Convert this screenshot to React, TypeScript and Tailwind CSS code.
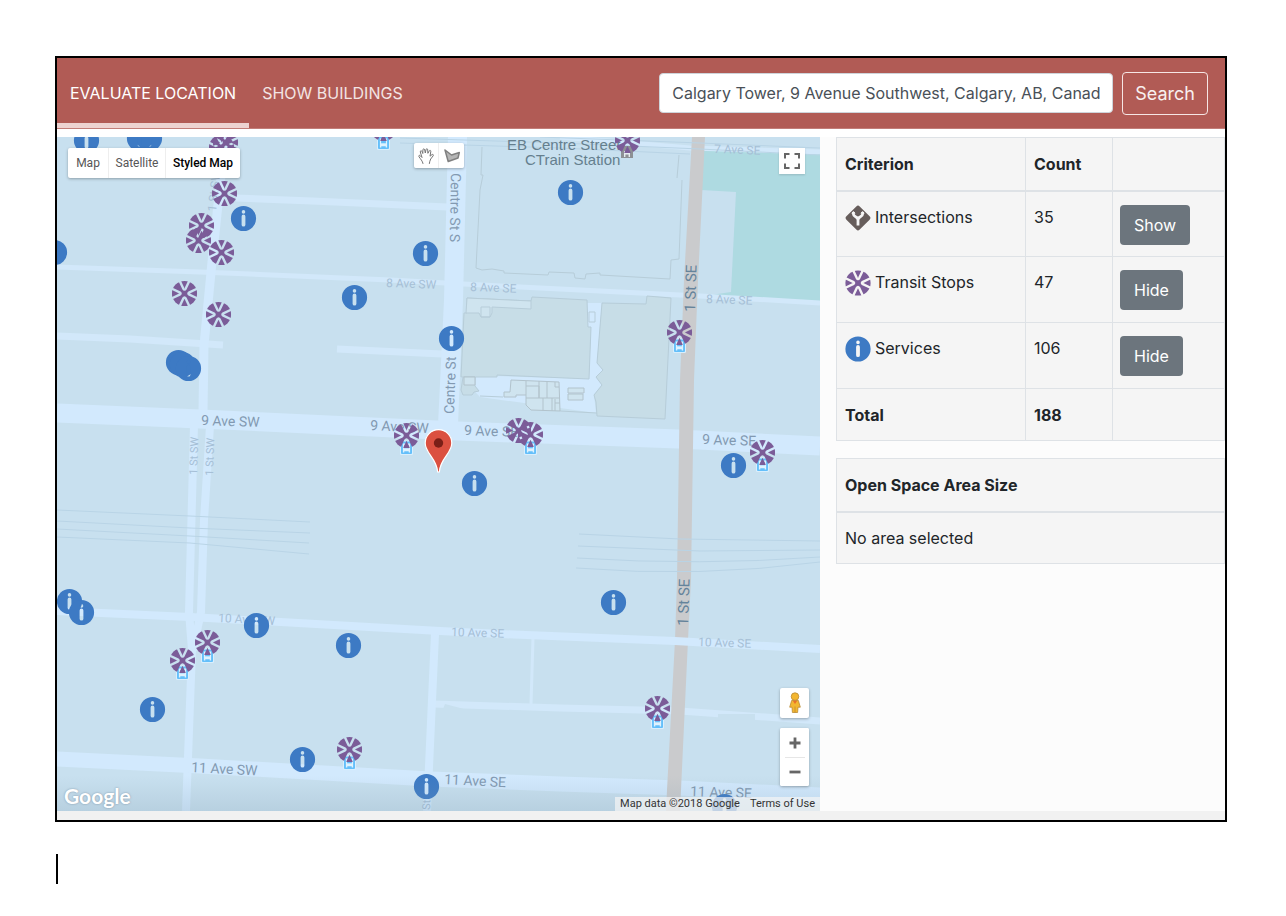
import { useId, type ReactNode } from "react";

const infoPins: [number, number][] = [
  [86, 140], [144, 134], [149, 138], [139, 138], [243, 218], [54, 252], [354, 297], [425, 253],
  [570, 192], [451, 338], [178, 362], [182, 364], [188, 368], [474, 483], [733, 465], [613, 602],
  [256, 625], [348, 645], [69, 601], [81, 612], [152, 709], [302, 759], [426, 786], [724, 806],
];

const transitPins: [number, number][] = [
  [221, 147], [225, 142], [224, 193], [201, 225], [198, 240], [221, 252], [184, 293], [218, 314],
  [627, 140], [383, 128], [679, 332], [406, 435], [518, 430], [530, 434], [762, 452], [207, 642],
  [182, 660], [349, 749], [657, 708],
];

const busStops: [number, number][] = [
  [383, 143], [679, 346], [406, 448], [530, 448], [762, 465], [207, 656], [182, 673], [349, 763], [657, 722],
];

type StreetLabel = { text: string; x: number; y: number; size: number; angle: number; fill: string };

const strong = "#8299b1";
const faint = "#a6bfd6";
const dark = "#64839b";

const labels: StreetLabel[] = [
  { text: "9 Ave SW", x: 201, y: 425, size: 14, angle: 2, fill: strong },
  { text: "9 Ave SW", x: 370, y: 430, size: 14, angle: 3, fill: strong },
  { text: "9 Ave SE", x: 464, y: 435, size: 14, angle: 2, fill: strong },
  { text: "9 Ave SE", x: 702, y: 444, size: 14, angle: 2, fill: strong },
  { text: "8 Ave SW", x: 386, y: 287, size: 12, angle: 2, fill: faint },
  { text: "8 Ave SE", x: 470, y: 291, size: 12, angle: 2, fill: faint },
  { text: "8 Ave SE", x: 706, y: 303, size: 12, angle: 2, fill: faint },
  { text: "7 Ave SE", x: 714, y: 153, size: 12, angle: 2, fill: faint },
  { text: "10 Ave SW", x: 218, y: 622, size: 12, angle: 3, fill: faint },
  { text: "10 Ave SE", x: 451, y: 636, size: 12, angle: 2, fill: faint },
  { text: "10 Ave SE", x: 698, y: 646, size: 12, angle: 2, fill: faint },
  { text: "11 Ave SW", x: 191, y: 772, size: 14, angle: 3, fill: strong },
  { text: "11 Ave SE", x: 444, y: 784, size: 14, angle: 3, fill: strong },
  { text: "11 Ave SE", x: 690, y: 796, size: 14, angle: 2, fill: strong },
  { text: "Centre St S", x: 451, y: 173, size: 14, angle: 91, fill: strong },
  { text: "Centre St", x: 454, y: 414, size: 14, angle: -88, fill: strong },
  { text: "1 St SE", x: 695, y: 312, size: 15, angle: -88, fill: dark },
  { text: "1 St SE", x: 688, y: 626, size: 15, angle: -88, fill: dark },
  { text: "1 St SW", x: 197, y: 475, size: 11, angle: -88, fill: faint },
  { text: "1 St SW", x: 213, y: 476, size: 11, angle: -88, fill: faint },
  { text: "1 St SW", x: 216, y: 212, size: 12, angle: -84, fill: faint },
  { text: "St", x: 430, y: 810, size: 11, angle: -88, fill: faint },
];

function InfoShape() {
  return (
    <path
      fill="#3d7ac4"
      fillRule="evenodd"
      d="M0-12.6A12.6 12.6 0 1 1 0 12.6 12.6 12.6 0 1 1 0-12.6ZM0-8.4a1.8 1.8 0 1 0 0 3.6 1.8 1.8 0 1 0 0-3.6ZM-1.9-2v8.2a1.9 1.9 0 0 0 3.8 0V-2a1.9 1.9 0 0 0-3.8 0Z"
    />
  );
}

function TransitShape({ maskId }: { maskId: string }) {
  const vee = "M-5-13-1.2-4.9Q0-2.9 1.2-4.9L5-13";
  return (
    <>
      <mask id={maskId} maskUnits="userSpaceOnUse" x={-13} y={-13} width={26} height={26}>
        <rect x={-13} y={-13} width={26} height={26} fill="white" />
        <g fill="none" stroke="black" strokeWidth={2.4} strokeLinejoin="round">
          <path d={vee} />
          <path d={vee} transform="rotate(90)" />
          <path d={vee} transform="rotate(180)" />
          <path d={vee} transform="rotate(270)" />
        </g>
      </mask>
      <circle r={12.6} fill="#7b5c98" mask={`url(#${maskId})`} />
    </>
  );
}

function IntersectionShape() {
  return (
    <>
      <rect x={-9.4} y={-9.4} width={18.8} height={18.8} rx={2.4} transform="rotate(45)" fill="#665d5b" />
      <path
        d="M-4.6-6V-4Q-4.6-2.4-2.4-1.2 0 0 0 2 0 0 2.4-1.2 4.6-2.4 4.6-4V-6M0 1V7.6"
        fill="none"
        stroke="#f5f5f5"
        strokeWidth={2.8}
        strokeLinejoin="round"
      />
      <path d="M-6.8-4.4-4.6-7-2.4-4.4ZM6.8-4.4 4.6-7 2.4-4.4Z" fill="#f5f5f5" />
    </>
  );
}

function CriterionIcon({ kind }: { kind: string }) {
  const id = useId();
  return (
    <svg viewBox="-13 -13 26 26" className="size-[26px] shrink-0" aria-hidden="true">
      {kind === "Intersections" && <IntersectionShape />}
      {kind === "Transit Stops" && <TransitShape maskId={id} />}
      {kind === "Services" && <InfoShape />}
    </svg>
  );
}

function MapDrawing() {
  return (
    <svg
      viewBox="57 137 763 674"
      preserveAspectRatio="xMidYMid slice"
      className="block h-full w-full font-[Roboto,sans-serif]"
      role="img"
      aria-label="Map of downtown Calgary"
    >
      <defs>
        <symbol id="info" viewBox="-13 -13 26 26" overflow="visible"><InfoShape /></symbol>
        <symbol id="transit" viewBox="-13 -13 26 26" overflow="visible"><TransitShape maskId="transit-slots" /></symbol>
        <symbol id="bus" viewBox="-6 -8 12 14" overflow="visible">
          <rect x={-6.5} y={-8} width={13} height={14.500} rx={1.5} fill="#d9effd" />
          <rect x={-5.5} y={-7} width={11} height={12.500} rx={1} fill="#64bffa" />
          <path d="M-3.6-5H3.6V4H2.2V2.8H-2.2V4H-3.6Z" fill="#dff2fe" />
          <path d="M-2.4-3.2H2.4V-.2H-2.4Z" fill="#64bffa" />
        </symbol>
        <linearGradient id="shade" x1="0" x2="0" y1="0" y2="1">
          <stop offset="0" stopColor="#7c98ab" stopOpacity="0" />
          <stop offset="1" stopColor="#7c98ab" stopOpacity=".22" />
        </linearGradient>
      </defs>

      <rect x={57} y={137} width={763} height={674} fill="#c8e0ef" />
      <path d="M703 148 820 152V303L697 297Z" fill="#aedae1" />
      <path d="M701 190 736 192 731 292 697 297Z" fill="#c8e0ef" />

      {/* secondary lanes */}
      <g fill="none" stroke="#d2e8fa">
        <path strokeWidth={7} d="M236 198 312 201 380 204 447 207M57 336 130 339 223 345M337 349 442 354M434 704 560 708 680 711 820 721" />
        <path strokeWidth={5} d="M57 267 200 272 390 280 520 287 700 296 820 303M560 137 690 148 820 152" />
        <path strokeWidth={3} d="M533 638 531 704" />
      </g>
      <path d="M445 704 464 709H443ZM718 714H755V722H718Z" fill="#c8e0ef" />

      {/* main streets */}
      <g fill="none" stroke="#d2e9fd" strokeLinejoin="round">
        <path strokeWidth={9} d="M225 137 212 262 204 345 203 412" />
        <path strokeWidth={8} d="M194 425 189 612 192 650 186 811M210 426 204 520 201 612 193 650" />
        <path strokeWidth={8} d="M435 634 427 811" />
        <path strokeWidth={19} d="M57 413 200 419 458 431 678 439 820 446" />
        <path strokeWidth={15} d="M57 759 200 766 430 779 560 784 680 788 820 795" />
      </g>
      <path d="M448 137H467L463 300 458 425H438L444 300Z" fill="#d2e9fd" />
      <path d="M692 137H705L698 280 694 380 691 580 688 640 681 790 680 811H666L667 790 675 640 677 580 680 380 684 280Z" fill="#cacbcd" />
      <path d="M57 611 190 617 440 631 500 634 675 641 820 649" fill="none" stroke="#d2e9fd" strokeWidth={8} />

      {/* rail lines */}
      <g fill="none" stroke="#b9d4e6" strokeWidth={1}>
        <path d="M57 510 190 516 310 522M57 521 190 528 310 533M57 529 190 536 309 543M57 537 190 543 309 554" />
        <path d="M579 534 680 539 820 541M578 546 700 551 820 550M577 558 Q700 566 820 557M576 568 Q700 578 820 562" />
        <path d="M400 138 560 143 700 149 820 155M400 143 560 148 690 154M540 137 700 143 820 148" />
      </g>

      {/* building footprints */}
      <g stroke="#b7cdd9" strokeWidth={1}>
        <path fill="none" d="M482 147 481 175H483L480 190 479 210 476 268 482 270 492 269 504 271V273L548 275 549 272 574 273 575 278 585 279 586 274 600 273V275L670 279 671 260 679 259 682 180M679 155 677 178" />
        <path fill="#d2e9fd" stroke="none" d="M587 303H602L600 325 597 363 603 370 596 377 602 385 594 395 596 413 480 397 461 377 496 376 589 379 591 328 587 327Z" />
        <path fill="none" d="M480 396 503 397M560 411 597 413" />
        <path fill="#c7dde7" d="M467 298 531 301 532 297 587 300 588 327H591L589 379 497 375V377L461 377 464 313H467Z" />
        <path fill="#c7dde7" d="M602 303 646 304 647 296 671 298 665 419 597 416 596 402 594 395 602 385 596 377 603 370 597 363Z" />
        <path fill="#cfe4ef" d="M467 298 531 301V309L492 307V313L490 317H481L479 313H466Z" />
        <path fill="none" d="M481 307H490V317H481ZM589 312H595V322H589Z" />
        <path fill="#c7dde7" d="M463 377H475V386L479 391 474 392 472 395H463L461 390Z" />
        <g stroke="#b2c3cc">
          <path fill="#cfe4ef" d="M464 377H475V385H464ZM511 380 559 382 560 411 531 410 526 405V395H516V397H504V392H510ZM568 388H584V393H568ZM568 394H583V400H568Z" />
          <path fill="none" d="M526 381V395M526 386H539V398M539 381V398M547 382V398M526 398H560M543 398V411M552 398V411M555 382V387H559M555 399V411M555 403H560" />
        </g>
      </g>

      {labels.map((l) => (
        <text key={`${l.text}-${l.x}-${l.y}`} fontSize={l.size} fill={l.fill} transform={`translate(${l.x} ${l.y}) rotate(${l.angle})`}>
          {l.text}
        </text>
      ))}
      <g fontSize={15} fill="#657f8e" className="font-['Liberation_Sans',Arial,sans-serif]">
        <text x={507} y={150}>EB Centre Street</text>
        <text x={525} y={165}>CTrain Station</text>
      </g>
      <path d="M621 146H633V158H621Z" fill="#8d9094" />
      <path d="M624 151H630V157H628.600V154.500H625.400V157H624Z" fill="#e6ecf0" />

      <g transform="translate(.5 .5)">
        {busStops.map(([x, y]) => (
          <use key={`${x}-${y}`} href="#bus" x={x - 6} y={y - 8} width={12} height={14} />
        ))}
        {transitPins.map(([x, y]) => (
          <use key={`${x}-${y}`} href="#transit" x={x - 13} y={y - 13} width={26} height={26} />
        ))}
        {infoPins.map(([x, y]) => (
          <use key={`${x}-${y}`} href="#info" x={x - 13} y={y - 13} width={26} height={26} />
        ))}
      </g>

      <g transform="translate(438.500 443)">
        <path
          d="M-.8 29C-1.800 15-13.300 10.500-13.300 0A13.300 13.300 0 0 1 13.300 0C13.300 10.500 1.800 15 .8 29Z"
          fill="#db5040"
          stroke="#fff"
          strokeWidth={1.2}
        />
        <circle r={4.700} fill="#7a1f17" />
      </g>
      <rect x={57} y={776} width={763} height={35} fill="url(#shade)" />
    </svg>
  );
}

function ControlButton({ label, className, children }: { label: string; className: string; children: ReactNode }) {
  return (
    <button type="button" aria-label={label} className={`flex items-center justify-center bg-white ${className}`}>
      {children}
    </button>
  );
}

function MapPane() {
  return (
    <section className="relative h-[674px] min-w-0 flex-1 overflow-hidden font-[Roboto,sans-serif]">
      <MapDrawing />

      <div className="absolute top-[11px] left-[11px] flex h-[30px] rounded-xs bg-white text-[12px] text-[#565656] shadow-[0_1px_3px_rgba(0,0,0,0.3)]">
        <button type="button" className="w-[40px]">Map</button>
        <button type="button" className="w-[58px] border-x border-[#eee]">Satellite</button>
        <button type="button" className="w-[74px] font-medium text-black">Styled Map</button>
      </div>

      <div className="absolute top-[6px] left-[357px] flex rounded-xs shadow-[0_1px_3px_rgba(0,0,0,0.3)]">
        <ControlButton label="Stop drawing" className="h-[25px] w-[25px] rounded-l-xs border-r border-[#eee]">
          <svg viewBox="0 0 18 18" className="size-[18px]" fill="none" stroke="#757575" strokeWidth="1" strokeLinecap="round">
            <path d="M6 16.500C5.500 14 3.500 12 2 9.800 1.200 8.500 2.500 7.800 3.400 8.800L5 10.500 3.300 5C3 3.600 4.600 3.200 5 4.500L5.800 6.500 5.900 3C5.800 1.600 7.500 1.500 7.700 2.900L8.300 6 9 2.600C9.200 1.300 10.800 1.500 10.700 2.800L10.900 6.300 12.200 4C12.700 2.800 14.100 3.300 13.800 4.600L13 9.200 15 7.600C16 6.900 16.900 8 16 9L13.700 12C12.800 13.500 12.700 15 12.400 16.500" />
          </svg>
        </ControlButton>
        <ControlButton label="Draw a shape" className="h-[25px] w-[25px] rounded-r-xs">
          <svg viewBox="0 0 18 18" className="size-[18px]">
            <path d="M2 3 8.500 8 16.300 5.500 15 11 5.200 14.500Z" fill="#b5b5b5" stroke="#808080" strokeWidth="1.5" strokeLinejoin="round" />
          </svg>
        </ControlButton>
      </div>

      <ControlButton label="Toggle fullscreen view" className="absolute top-[11px] right-[15px] size-[26px] shadow-[0_1px_2px_rgba(0,0,0,0.15)]">
        <svg viewBox="0 0 16 16" className="size-[16px]" fill="none" stroke="#666" strokeWidth="2">
          <path d="M1 5.500V1H5.500M10.500 1H15V5.500M15 10.500V15H10.500M5.500 15H1V10.500" />
        </svg>
      </ControlButton>

      <div className="absolute right-[11px] bottom-[25px] flex flex-col gap-[10px]">
        <ControlButton label="Street View" className="h-[30px] w-[29px] rounded-xs shadow-[0_1px_3px_rgba(0,0,0,0.3)]">
          <svg viewBox="0 0 12 22" className="h-[22px] w-[12px]" fill="#f3b62f" stroke="#b98a35" strokeWidth=".8">
            <path d="M2.600 8.500H9.400L11.300 15.200H9L8.600 20.500H3.400L3 15.200H.7Z" />
            <circle cx="6" cy="4.600" r="3.800" />
            <path d="M3.800 8.800 6 12 8.200 8.800Z" fill="#e8702a" stroke="none" />
            <path d="M6 14.500V20.500" />
          </svg>
        </ControlButton>
        <div className="flex flex-col items-center rounded-xs bg-white shadow-[0_1px_3px_rgba(0,0,0,0.3)]">
          <ControlButton label="Zoom in" className="h-[29px] w-[29px] rounded-xs">
            <svg viewBox="0 0 12 12" className="size-[12px]"><path d="M.5 6H11.500M6 .5V11.500" stroke="#666" strokeWidth="2.800" /></svg>
          </ControlButton>
          <div className="h-px w-5 bg-[#e6e6e6]" />
          <ControlButton label="Zoom out" className="h-[28px] w-[29px] rounded-xs">
            <svg viewBox="0 0 12 12" className="size-[12px]"><path d="M.5 6H11.500" stroke="#666" strokeWidth="2.800" /></svg>
          </ControlButton>
        </div>
      </div>

      <a href="#google" className="absolute bottom-0 left-[7px] font-[Lato,sans-serif] text-[21px] leading-[30px] font-bold text-white [text-shadow:0_0_2px_rgba(80,100,120,0.6)]">
        Google
      </a>
      <div className="absolute right-0 bottom-0 flex h-[14px] items-center bg-[#f5f5f5]/70 text-[11px] leading-[14px] text-[#333]">
        <span className="px-[5px]">Map data ©2018 Google</span>
        <a href="#terms" className="px-[5px]">Terms of Use</a>
      </div>
    </section>
  );
}

const criteria = [
  { name: "Intersections", count: 35, action: "Show" },
  { name: "Transit Stops", count: 47, action: "Hide" },
  { name: "Services", count: 106, action: "Hide" },
];

function Sidebar() {
  const line = "border border-[#dee2e6]";
  return (
    <aside className="w-[405px] shrink-0 bg-[#fcfcfc] pl-4 text-[16px] leading-6 text-[#212529]">
      <table className="w-full table-fixed border-collapse bg-[#f5f5f5] text-left">
        <colgroup>
          <col className="w-[189px]" />
          <col className="w-[87px]" />
          <col />
        </colgroup>
        <thead>
          <tr className="h-[53px] border-b-2 border-[#dee2e6]">
            <th scope="col" className={`${line} px-[8px] font-bold`}>Criterion</th>
            <th scope="col" className={`${line} px-[8px] font-bold`}>Count</th>
            <th scope="col" className={line} aria-label="Visibility" />
          </tr>
        </thead>
        <tbody>
          {criteria.map((c) => (
            <tr key={c.name} className="h-[66px] align-top">
              <td className={`${line} px-[8px] pt-[13px]`}>
                <div className="flex gap-[4px]">
                  <CriterionIcon kind={c.name} />
                  <span>{c.name}</span>
                </div>
              </td>
              <td className={`${line} px-[8px] pt-[13px]`}>{c.count}</td>
              <td className={`${line} px-[7px] pt-[13px]`}>
                <button type="button" className="h-10 rounded bg-[#6c757d] px-[14px] text-white">{c.action}</button>
              </td>
            </tr>
          ))}
          <tr className="h-[52px]">
            <th scope="row" className={`${line} px-[8px] font-bold`}>Total</th>
            <td className={`${line} px-[8px] font-bold`}>188</td>
            <td className={line} />
          </tr>
        </tbody>
      </table>

      <table className="mt-[17px] w-full border-collapse bg-[#f5f5f5] text-left">
        <thead>
          <tr className="h-[53px] border-b-2 border-[#dee2e6]">
            <th scope="col" className={`${line} px-[8px] font-bold`}>Open Space Area Size</th>
          </tr>
        </thead>
        <tbody>
          <tr className="h-[52px]">
            <td className={`${line} px-[8px]`}>No area selected</td>
          </tr>
        </tbody>
      </table>
    </aside>
  );
}

export default function App() {
  return (
    <div className="min-h-screen bg-white pt-14 pr-[59px] pl-[55px] font-[Inter,sans-serif]">
      <div className="border-2 border-black bg-white">
        <header className="flex h-[71px] items-stretch justify-between border-b border-[#c27d78] bg-[#b15b55]">
          <nav className="flex text-[16px] whitespace-nowrap text-white">
            <a href="#evaluate" className="flex items-center border-b-[5px] border-[#edd3d1] px-[13px] pt-[5px]">EVALUATE LOCATION</a>
            <a href="#buildings" className="flex items-center px-[13px] text-[#f3e4e3]">SHOW BUILDINGS</a>
          </nav>
          <form className="flex items-center gap-[9px] pr-[17px]" onSubmit={(e) => e.preventDefault()}>
            <input
              type="text"
              aria-label="Location"
              defaultValue="Calgary Tower, 9 Avenue Southwest, Calgary, AB, Canada"
              className="h-10 w-[454px] rounded border border-[#ced4da] bg-white px-3 text-[16px] text-[#495057]"
            />
            <button type="submit" className="h-[43px] rounded border border-[#f6e6e5] px-3 text-[18px] text-[#f8f0f0]">Search</button>
          </form>
        </header>
        <main className="flex pt-2">
          <MapPane />
          <Sidebar />
        </main>
        <div className="h-[9px] bg-[#f1f1f1]" />
      </div>
      <div className="mt-8 ml-px h-[30px] w-[2px] bg-black" />
    </div>
  );
}
